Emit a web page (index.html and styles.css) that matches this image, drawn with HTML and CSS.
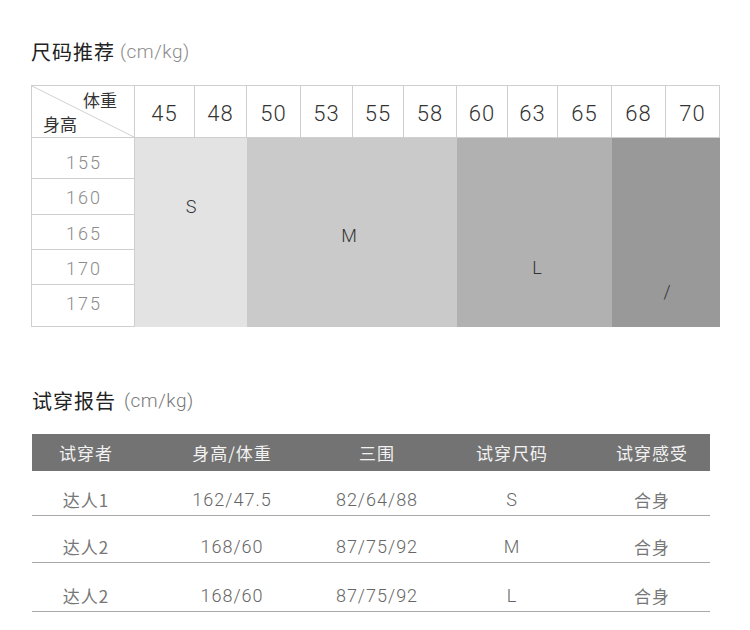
FILE: index.html
```html
<!DOCTYPE html>
<html lang="zh-CN">
<head>
<meta charset="utf-8">
<title>尺码推荐</title>
<link rel="stylesheet" href="styles.css">
</head>
<body>
<div class="page">
  <h2 class="title title-first">尺码推荐 <span class="unit unit-light">(cm/kg)</span></h2>

  <div class="size-grid">
    <div class="hcell corner">
      <svg class="diag" width="103" height="52" viewBox="0 0 103 52" preserveAspectRatio="none"><line x1="0" y1="0" x2="103" y2="52" stroke="#cfcfcf" stroke-width="1"/></svg>
      <span class="corner-w">体重</span>
      <span class="corner-h">身高</span>
    </div>
    <div class="hcell">45</div>
    <div class="hcell">48</div>
    <div class="hcell">50</div>
    <div class="hcell">53</div>
    <div class="hcell">55</div>
    <div class="hcell">58</div>
    <div class="hcell">60</div>
    <div class="hcell">63</div>
    <div class="hcell">65</div>
    <div class="hcell">68</div>
    <div class="hcell">70</div>

    <div class="rcell r1">155</div>
    <div class="rcell r2">160</div>
    <div class="rcell r3">165</div>
    <div class="rcell r4">170</div>
    <div class="rcell r5">175</div>

    <div class="zone zone-s"><span>S</span></div>
    <div class="zone zone-m"><span>M</span></div>
    <div class="zone zone-l"><span>L</span></div>
    <div class="zone zone-x"><span>/</span></div>
  </div>

  <h2 class="title title-second">试穿报告 <span class="unit">(cm/kg)</span></h2>

  <div class="report">
    <div class="report-row report-head">
      <div>试穿者</div><div>身高/体重</div><div>三围</div><div>试穿尺码</div><div>试穿感受</div>
    </div>
    <div class="report-row report-body b1">
      <div>达人1</div><div>162/47.5</div><div>82/64/88</div><div>S</div><div>合身</div>
    </div>
    <div class="report-row report-body b2">
      <div>达人2</div><div>168/60</div><div>87/75/92</div><div>M</div><div>合身</div>
    </div>
    <div class="report-row report-body b3">
      <div>达人2</div><div>168/60</div><div>87/75/92</div><div>L</div><div>合身</div>
    </div>
  </div>
</div>
</body>
</html>
```

FILE: styles.css
```css
* { box-sizing: border-box; }
html, body { margin: 0; padding: 0; background: #ffffff; }
body {
  font-family: "Roboto", "Noto Sans CJK SC", sans-serif;
  color: #333;
}
.page {
  width: 750px;
  padding: 40px 0 0 31px;
}
.title {
  margin: 0;
  height: 24px;
  display: flex;
  align-items: center;
  gap: 6px;
  font-family: "Noto Sans CJK SC", sans-serif;
  font-weight: 400;
  font-size: 20px;
  line-height: 24px;
  letter-spacing: 1px;
  color: #222;
}
.unit {
  font-family: "Roboto", sans-serif;
  font-weight: 300;
  font-size: 19px;
  line-height: 24px;
  letter-spacing: 0.5px;
  color: #777;
}
.unit-light { color: #8a8a8a; margin-left: -1px; }
.title-first { margin-bottom: 21px; }
.title-second { margin-top: 62px; margin-bottom: 21px; padding-left: 1px; gap: 8px; }

/* size chart */
.size-grid {
  display: grid;
  width: 689px;
  grid-template-columns: 103px 60px 52px 54px 52px 51px 53px 51px 50px 54px 54px 54px;
  grid-template-rows: 52px 41px 36px 35px 35px 42px;
  border-top: 1px solid #cfcfcf;
  border-left: 1px solid #cfcfcf;
}
.hcell {
  border-right: 1px solid #cfcfcf;
  border-bottom: 1px solid #cfcfcf;
  display: flex;
  align-items: center;
  justify-content: center;
  font-weight: 300;
  font-size: 22px;
  letter-spacing: 1px;
  color: #333;
  padding-top: 3px;
}
.corner {
  position: relative;
  display: block;
  padding: 0;
}
.diag {
  position: absolute;
  left: 0;
  top: 0;
  width: 102px;
  height: 51px;
}
.corner-w, .corner-h {
  position: absolute;
  font-family: "Noto Sans CJK SC", sans-serif;
  font-weight: 400;
  font-size: 17px;
  line-height: 20px;
  letter-spacing: 0;
  color: #333;
}
.corner-w { right: 17px; top: 4px; }
.corner-h { left: 11px; top: 28px; }

.rcell {
  grid-column: 1;
  border-right: 1px solid #cfcfcf;
  border-bottom: 1px solid #cfcfcf;
  display: flex;
  justify-content: center;
  align-items: flex-start;
  font-weight: 300;
  font-size: 18px;
  line-height: 20px;
  letter-spacing: 2px;
  color: #8c8c8c;
  padding-left: 2px;
}
.r1 { grid-row: 2; padding-top: 15px; }
.r2 { grid-row: 3; padding-top: 9px; }
.r3 { grid-row: 4; padding-top: 9px; }
.r4 { grid-row: 5; padding-top: 9px; }
.r5 { grid-row: 6; padding-top: 9px; }

.zone {
  grid-row: 2 / 7;
  display: flex;
  justify-content: center;
  align-items: flex-start;
  font-weight: 300;
  font-size: 18px;
  line-height: 20px;
  color: #333;
}
.zone-s { grid-column: 2 / 4; background: #e3e3e3; padding-top: 59px; }
.zone-m { grid-column: 4 / 8; background: #cacaca; padding-top: 88px; padding-right: 6px; }
.zone-l { grid-column: 8 / 11; background: #b1b1b1; padding-top: 120px; padding-left: 5px; }
.zone-x { grid-column: 11 / 13; background: #999999; padding-top: 144px; padding-left: 2px; }

/* try-on report */
.report {
  width: 678px;
  margin-left: 1px;
}
.report-row {
  display: grid;
  grid-template-columns: 108px 184px 106px 164px 116px;
}
.report-row > div {
  text-align: center;
}
.report-head {
  height: 37px;
  background: #737373;
  align-items: center;
  font-family: "Noto Sans CJK SC", sans-serif;
  font-size: 17px;
  letter-spacing: 1px;
  color: #f2f2f2;
}
.report-body {
  align-items: end;
  border-bottom: 1px solid #a8a8a8;
  font-weight: 300;
  font-size: 18px;
  line-height: 20px;
  letter-spacing: 1px;
  color: #666;
  padding-bottom: 5px;
}
.report-body > div:first-child,
.report-body > div:last-child {
  font-family: "Noto Sans CJK SC", "Roboto", sans-serif;
  font-weight: 400;
  font-size: 17px;
  color: #777;
}
.b1 { height: 45px; }
.b2 { height: 47px; }
.b3 { height: 49px; }
```
